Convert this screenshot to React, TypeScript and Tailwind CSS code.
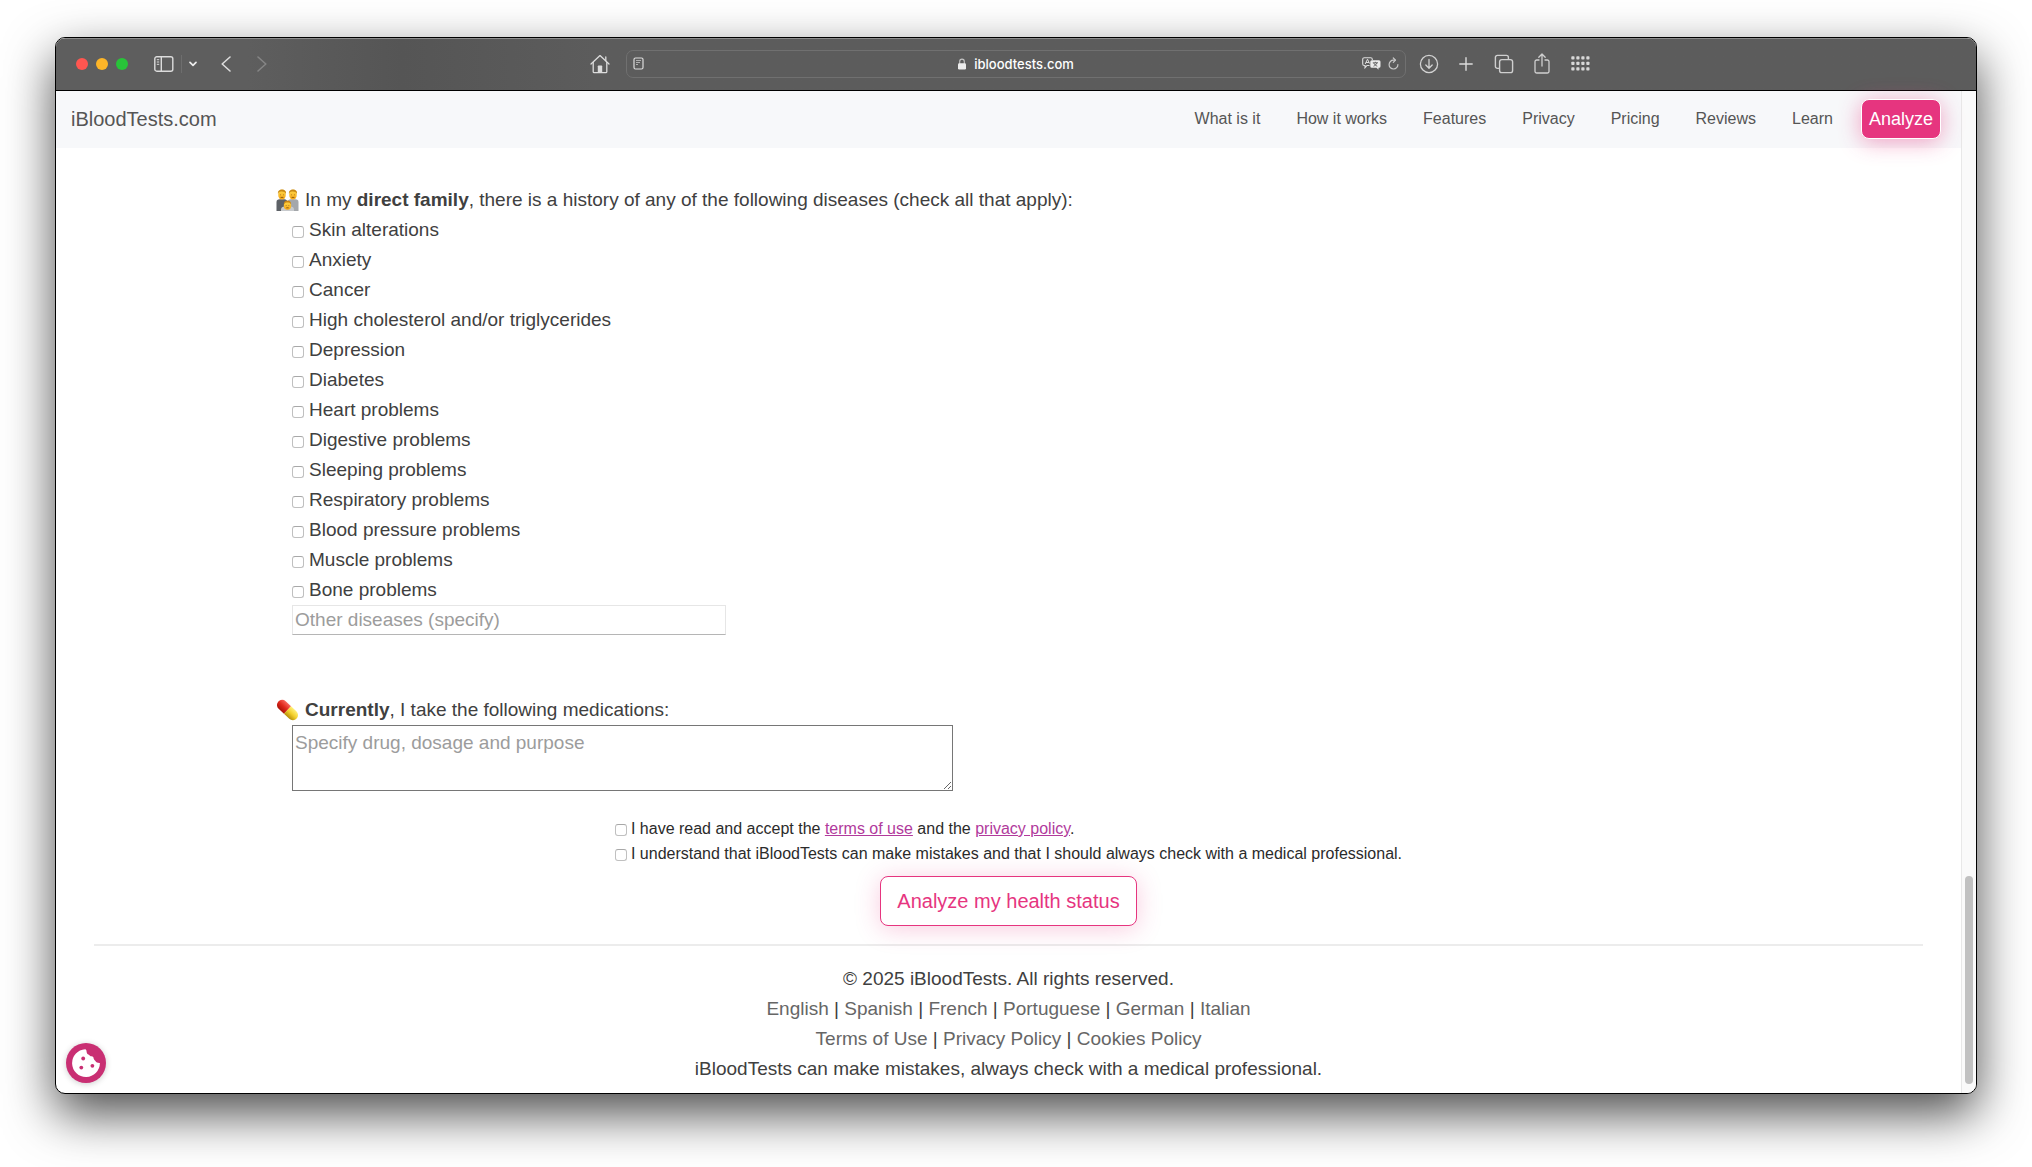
import React from "react";

const diseases = [
  "Skin alterations",
  "Anxiety",
  "Cancer",
  "High cholesterol and/or triglycerides",
  "Depression",
  "Diabetes",
  "Heart problems",
  "Digestive problems",
  "Sleeping problems",
  "Respiratory problems",
  "Blood pressure problems",
  "Muscle problems",
  "Bone problems",
];

const navLinks = ["What is it", "How it works", "Features", "Privacy", "Pricing", "Reviews", "Learn"];
const languages = ["English", "Spanish", "French", "Portuguese", "German", "Italian"];
const legal = ["Terms of Use", "Privacy Policy", "Cookies Policy"];

const checkboxClass =
  "size-3 shrink-0 appearance-none rounded-[3px] border border-[#c0c0c0] border-t-[#a8a8a8] bg-white checked:bg-[#e6337f]";

function SidebarIcon() {
  return (
    <svg width="20" height="16" viewBox="0 0 20 16" fill="none" stroke="#dcdcdc" strokeWidth="1.4">
      <rect x="0.8" y="0.8" width="18" height="14.4" rx="2" />
      <path d="M7.3 1v14" />
      <path d="M2.8 3.7h2.4M2.8 6h2.4M2.8 8.3h2.4" strokeWidth="1" />
    </svg>
  );
}

function HomeIcon() {
  return (
    <svg width="20" height="20" viewBox="0 0 20 20" fill="none" stroke="#dcdcdc" strokeWidth="1.3" strokeLinejoin="round" strokeLinecap="round">
      <path d="M1 10 10 1.6 19 10" />
      <path d="M3.2 8.5v9.2c0 .6.4 1 1 1h11.6c.6 0 1-.4 1-1V8.5M15.8 6.5V3" />
      <path d="M7.8 18.5v-6.3c0-.4.3-.7.7-.7h3c.4 0 .7.3.7.7v6.3z" fill="#dcdcdc" stroke="none" />
    </svg>
  );
}

function ReaderIcon() {
  return (
    <svg width="11" height="13" viewBox="0 0 11 13" fill="none" stroke="#dcdcdc">
      <rect x="1" y="1" width="9" height="11" rx="1.5" strokeWidth="1.2" />
      <path d="M3 3.5h5M3 5.5h4M3 7.5h2" stroke="#b0b0b0" />
    </svg>
  );
}

function LockIcon() {
  return (
    <svg width="8" height="12" viewBox="0 0 8 12">
      <path d="M1.7 6V3.4a2.3 2.3 0 0 1 4.6 0V6" fill="none" stroke="#c4c4c4" strokeWidth="1.1" />
      <rect x="0" y="5.2" width="8" height="6.3" rx="1.2" fill="#ececec" />
    </svg>
  );
}

function TranslateIcon() {
  return (
    <svg width="19" height="13" viewBox="0 0 19 13" fill="none">
      <path d="M7.5 8.5H5L3 10.8V8.5H2.3A1.6 1.6 0 0 1 .7 6.9V2.3A1.6 1.6 0 0 1 2.3.7h6.4a1.6 1.6 0 0 1 1.6 1.6V3" stroke="#dcdcdc" strokeWidth="1.1" />
      <path d="m3.2 7 2.3-4.8L7.5 6.5M4 5.5h3" stroke="#dcdcdc" />
      <path d="M9.8 3.3h7.2A1.5 1.5 0 0 1 18.5 4.8v4.4a1.5 1.5 0 0 1-1.5 1.5h-.5v2l-2-2H9.8a1.5 1.5 0 0 1-1.5-1.5V4.8a1.5 1.5 0 0 1 1.5-1.5z" fill="#ececec" />
      <path d="M10.8 5.8h5.2M13.4 4.8v1M11.5 9.2c1.5-.6 2.8-1.7 3.4-3.4M11.8 6c.6 1.5 1.8 2.6 3.5 3.2" stroke="#5c5c5c" strokeWidth="0.9" />
    </svg>
  );
}

function ReloadIcon() {
  return (
    <svg width="11" height="13" viewBox="0 0 11 13" fill="none" stroke="#c8c8c8" strokeWidth="1.2" strokeLinecap="round" strokeLinejoin="round">
      <path d="M9.9 7.5A4.4 4.4 0 1 1 5.5 3.2h1.7" />
      <path d="M5.3 1 7.5 3.2 5.3 5.4" />
    </svg>
  );
}

function DownloadIcon() {
  return (
    <svg width="20" height="20" viewBox="0 0 20 20" fill="none" stroke="#d2d2d2" strokeWidth="1.3" strokeLinecap="round" strokeLinejoin="round">
      <circle cx="10" cy="10" r="8.6" />
      <path d="M10 5.5v8.5M6.8 11l3.2 3.2 3.2-3.2" />
    </svg>
  );
}

function PlusIcon() {
  return (
    <svg width="14" height="14" viewBox="0 0 14 14" fill="none" stroke="#dcdcdc" strokeWidth="1.4" strokeLinecap="round">
      <path d="M7 .8v12.4M.8 7h12.4" />
    </svg>
  );
}

function TabsIcon() {
  return (
    <svg width="20" height="20" viewBox="0 0 20 20" fill="none" stroke="#cfcfcf" strokeWidth="1.4">
      <rect x="5.6" y="5.6" width="13" height="13" rx="2.2" />
      <path d="M5.6 14.4H3.4a2 2 0 0 1-2-2v-9a2 2 0 0 1 2-2h9a2 2 0 0 1 2 2v2.2" />
    </svg>
  );
}

function ShareIcon() {
  return (
    <svg width="16" height="21" viewBox="0 0 16 21" fill="none" stroke="#cfcfcf" strokeWidth="1.3" strokeLinecap="round" strokeLinejoin="round">
      <path d="M5 7H2.7A1.7 1.7 0 0 0 1 8.7v9.6A1.7 1.7 0 0 0 2.7 20h10.6a1.7 1.7 0 0 0 1.7-1.7V8.7A1.7 1.7 0 0 0 13.3 7H11" />
      <path d="M8 13V1.2M4.8 4.2 8 1l3.2 3.2" />
    </svg>
  );
}

function GridIcon() {
  return (
    <svg width="19" height="15" viewBox="0 0 19 15" fill="#d8d8d8">
      {[0, 5, 10, 15].map((x) =>
        [0, 5.5, 11].map((y) => <rect key={`${x}-${y}`} x={x + 0.3} y={y + 0.3} width="3.2" height="3.2" rx="0.8" />)
      )}
    </svg>
  );
}

function FamilyIcon() {
  return (
    <svg width="23" height="22" viewBox="0 0 23 22" role="img" aria-label="Family">
      <defs>
        <linearGradient id="face" x1="0" y1="0" x2="0" y2="1">
          <stop offset="0" stopColor="#ffd94a" />
          <stop offset="1" stopColor="#f5a516" />
        </linearGradient>
      </defs>
      <path d="M.5 22V13c0-1.7 1.2-2.7 3-2.7h5c1.5 0 2.7 1 2.7 2.7v9z" fill="#5d6166" />
      <path d="M11.8 22V13c0-1.7 1.2-2.7 2.7-2.7h5c1.8 0 3 1 3 2.7v9z" fill="#a4a7ab" />
      <path d="M5 22v-1.5c0-2 1.5-3 3.5-3h6c2 0 3.5 1 3.5 3V22z" fill="#c7cacd" />
      <ellipse cx="6" cy="5.7" rx="3.8" ry="4.9" fill="url(#face)" />
      <ellipse cx="17" cy="5.7" rx="3.8" ry="4.9" fill="url(#face)" />
      <path d="M2 5C1.5 2 3.3.4 6 .4S10.500 2 10 5C9 2.800 7.500 2.300 5 2.500 3.500 2.500 2.700 3.200 2 5z" fill="#c98a14" />
      <path d="M13 5c-.5-3 1.300-4.600 4-4.600S21.500 2 21 5c-1-2.200-2.500-2.700-5-2.500-1.500 0-2.300.7-3 2.500z" fill="#c98a14" />
      <path d="M4.500 5.600v.6M7.500 5.600v.6M15.500 5.600v.6M18.500 5.600v.6M4.600 8.400h2.800M15.600 8.400h2.800" stroke="#7a4a0a" strokeWidth="0.8" />
      <ellipse cx="11.500" cy="16.500" rx="3.700" ry="4.300" fill="url(#face)" />
      <path d="M7.800 15.500c0-2.500 1.500-4 3.700-4s3.700 1.500 3.700 4c-1-1.700-2-2-3.700-2s-2.700.3-3.700 2z" fill="#c98310" />
      <path d="M10.200 16.300v.6M12.800 16.300v.6M10.300 18.800h2.400" stroke="#7a4a0a" strokeWidth="0.8" />
    </svg>
  );
}

function PillIcon() {
  return (
    <svg width="23" height="22" viewBox="0 0 23 22" role="img" aria-label="Pill">
      <defs>
        <linearGradient id="red" x1="0" y1="0" x2="0" y2="1">
          <stop offset="0" stopColor="#f7665c" />
          <stop offset="0.5" stopColor="#e0281c" />
          <stop offset="1" stopColor="#a81208" />
        </linearGradient>
        <linearGradient id="yellow" x1="0" y1="0" x2="0" y2="1">
          <stop offset="0" stopColor="#fff07a" />
          <stop offset="0.5" stopColor="#f3cf2a" />
          <stop offset="1" stopColor="#b58e0a" />
        </linearGradient>
      </defs>
      <g transform="rotate(43 11.5 11)">
        <path d="M11.5 5.800H4.200a5.200 5.200 0 0 0 0 10.400h7.300z" fill="url(#red)" />
        <path d="M11.500 5.800h7.300a5.200 5.200 0 0 1 0 10.400h-7.300z" fill="url(#yellow)" />
      </g>
    </svg>
  );
}

function CookieIcon() {
  return (
    <svg width="28" height="28" viewBox="0 0 28 28">
      <path
        d="M13.2.2A13.900 13.900 0 1 0 27.900 14c-2 .2-3.700-.6-4.700-2.200-.6-1-1.400-1.300-1.600-2.600-.2-1.200-.8-1.800-2-1.900-1.400 0-2-.6-2.700-1.500C15.200 5.300 14.600 3.800 14.500 2c0-.8-.4-1.600-1.300-1.800z"
        fill="#fff"
      />
      <circle cx="11.2" cy="9.500" r="1.900" fill="#c92f73" />
      <circle cx="9.300" cy="18.600" r="1.900" fill="#c92f73" />
      <circle cx="20.400" cy="16.800" r="1.900" fill="#c92f73" />
    </svg>
  );
}

function Toolbar() {
  return (
    <div className="flex h-[53px] items-center border-t border-b border-t-[#8c8c8c] border-b-black bg-linear-to-r from-[#5e5e5e] from-10% via-[#555555] via-18% to-[#5c5c5c] to-28% pb-0.5">
      <div className="flex flex-1 items-center pr-4 pl-5">
        <div className="flex gap-2">
          <span className="size-3 rounded-full bg-[#ff5650]" />
          <span className="size-3 rounded-full bg-[#fdb528]" />
          <span className="size-3 rounded-full bg-[#28c439]" />
        </div>
        <button className="ml-[26px]" aria-label="Show sidebar"><SidebarIcon /></button>
        <span className="ml-[7px] h-[18px] w-px bg-[#6e6e6e]" />
        <button className="ml-[7px]" aria-label="Tab groups">
          <svg width="8" height="6" viewBox="0 0 8 6" fill="none" stroke="#ececec" strokeWidth="1.7" strokeLinecap="round" strokeLinejoin="round"><path d="m1 1.3 3 3 3-3" /></svg>
        </button>
        <button className="ml-6" aria-label="Back">
          <svg width="10" height="16" viewBox="0 0 10 16" fill="none" stroke="#dcdcdc" strokeWidth="1.6" strokeLinecap="round" strokeLinejoin="round"><path d="M9 1 1.200 8 9 15" /></svg>
        </button>
        <button className="ml-[26px]" aria-label="Forward">
          <svg width="10" height="16" viewBox="0 0 10 16" fill="none" stroke="#858585" strokeWidth="1.6" strokeLinecap="round" strokeLinejoin="round"><path d="m1 1 7.800 7L1 15" /></svg>
        </button>
        <button className="ml-auto" aria-label="Home"><HomeIcon /></button>
      </div>
      <div className="flex h-7 w-[780px] items-center justify-between rounded-[7px] border border-[#707070] px-[6px]">
        <div className="flex w-11">
          <button aria-label="Reader"><ReaderIcon /></button>
        </div>
        <div className="flex items-center gap-2 font-['Inter',sans-serif] text-[13px] leading-4 font-medium text-white">
          <LockIcon />
          ibloodtests.com
        </div>
        <div className="flex w-11 items-center justify-end gap-[7px]">
          <button aria-label="Translate"><TranslateIcon /></button>
          <button aria-label="Reload"><ReloadIcon /></button>
        </div>
      </div>
      <div className="flex flex-1 items-center pr-[23px] pl-[13px]">
        <button aria-label="Downloads"><DownloadIcon /></button>
        <button className="ml-5" aria-label="New tab"><PlusIcon /></button>
        <button className="ml-[21px]" aria-label="Tab overview"><TabsIcon /></button>
        <button className="ml-5" aria-label="Share"><ShareIcon /></button>
        <button className="ml-[21px]" aria-label="Extensions"><GridIcon /></button>
      </div>
    </div>
  );
}

function SiteNav() {
  return (
    <header className="relative flex h-[57px] items-center justify-between bg-[#f7f8fa] pr-5 pb-0.5 pl-[15px] text-[#555]">
      <a href="#" className="text-xl">iBloodTests.com</a>
      <nav className="flex items-center gap-7">
        <div className="flex gap-9 text-base">
          {navLinks.map((l) => (
            <a key={l} href="#">{l}</a>
          ))}
        </div>
        <a
          href="#"
          className="rounded-lg border border-white bg-[#e6357f] px-[7px] py-1.5 text-lg leading-[26px] text-white shadow-[0_3px_22px_rgba(230,53,127,0.45)]"
        >
          Analyze
        </a>
      </nav>
    </header>
  );
}

function LinkRow({ items }: { items: string[] }) {
  return (
    <p>
      {items.map((item, i) => (
        <React.Fragment key={item}>
          {i > 0 && " | "}
          <a href="#" className="text-[#666]">{item}</a>
        </React.Fragment>
      ))}
    </p>
  );
}

export default function App() {
  return (
    <div className="min-h-screen bg-white px-[55px] pt-[37px] pb-[72px] font-['Liberation_Sans',Arial,sans-serif]">
      <div className="overflow-hidden rounded-[10px] border border-black bg-white shadow-[0_20px_50px_rgba(0,0,0,0.7)]">
        <Toolbar />
        <div className="relative flex">
          <div className="min-w-0 flex-1">
            <SiteNav />
            <form onSubmit={(e) => e.preventDefault()}>
              <div className="mx-auto w-[76.9%] pt-[37px] text-[19px] leading-[30px] text-[#404040]">
                <fieldset>
                  <legend className="flex items-center gap-1.5">
                    <FamilyIcon />
                    <span>
                      In my <b className="font-bold">direct family</b>, there is a history of any of the following diseases (check all that apply):
                    </span>
                  </legend>
                  <div className="pl-4">
                    {diseases.map((d) => (
                      <label key={d} className="flex items-center gap-[5px]">
                        <input type="checkbox" className={checkboxClass + " mt-1"} />
                        {d}
                      </label>
                    ))}
                    <input
                      type="text"
                      aria-label="Other diseases"
                      placeholder="Other diseases (specify)"
                      className="block h-[30px] w-[434px] border border-[#e6e6e6] border-b-[#b5b5b5] px-0.5 placeholder:text-[#9c9c9c]"
                    />
                  </div>
                </fieldset>
                <label htmlFor="meds" className="mt-[60px] flex items-center gap-1.5">
                  <PillIcon />
                  <span>
                    <b className="font-bold">Currently</b>, I take the following medications:
                  </span>
                </label>
                <textarea
                  id="meds"
                  placeholder="Specify drug, dosage and purpose"
                  className="ml-4 block h-[66px] w-[661px] border border-[#767676] px-0.5 py-0.5 placeholder:text-[#9c9c9c]"
                />
              </div>
              <div className="mt-[25px] flex flex-col items-center">
                <div className="text-base leading-[25px] text-[#2b2b2b]">
                  <div className="flex items-center gap-1">
                    <input id="terms" type="checkbox" className={checkboxClass + " mt-0.5"} />
                    <label htmlFor="terms">
                      I have read and accept the <a href="#" className="text-[#b13a9c] underline">terms of use</a> and the{" "}
                      <a href="#" className="text-[#b13a9c] underline">privacy policy</a>.
                    </label>
                  </div>
                  <label className="flex items-center gap-1">
                    <input type="checkbox" className={checkboxClass + " mt-0.5"} />
                    I understand that iBloodTests can make mistakes and that I should always check with a medical professional.
                  </label>
                </div>
                <button className="mt-2.5 rounded-lg border border-[#e6357f] bg-white px-4 py-[9px] text-xl leading-[30px] text-[#e6357f] shadow-[0_3px_24px_rgba(230,53,127,0.25)]">
                  Analyze my health status
                </button>
              </div>
            </form>
            <footer className="mx-[38px] mt-[18px] border-t-2 border-[#ececec] pt-[18px] pb-[9px] text-center text-[19px] leading-[30px] text-[#404040]">
              <p>© 2025 iBloodTests. All rights reserved.</p>
              <LinkRow items={languages} />
              <LinkRow items={legal} />
              <p>iBloodTests can make mistakes, always check with a medical professional.</p>
            </footer>
          </div>
          <div className="flex w-[15px] flex-col items-center justify-end border-l border-[#e8e8e8] bg-[#fafafa] pb-[9px]">
            <div className="h-[208px] w-2 rounded-full bg-[#c1c1c1]" />
          </div>
          <button
            aria-label="Cookie settings"
            className="absolute bottom-2.5 left-2.5 flex size-10 items-center justify-center rounded-full bg-[#c92f73] shadow-[0_1px_6px_rgba(0,0,0,0.2)]"
          >
            <CookieIcon />
          </button>
        </div>
      </div>
    </div>
  );
}
